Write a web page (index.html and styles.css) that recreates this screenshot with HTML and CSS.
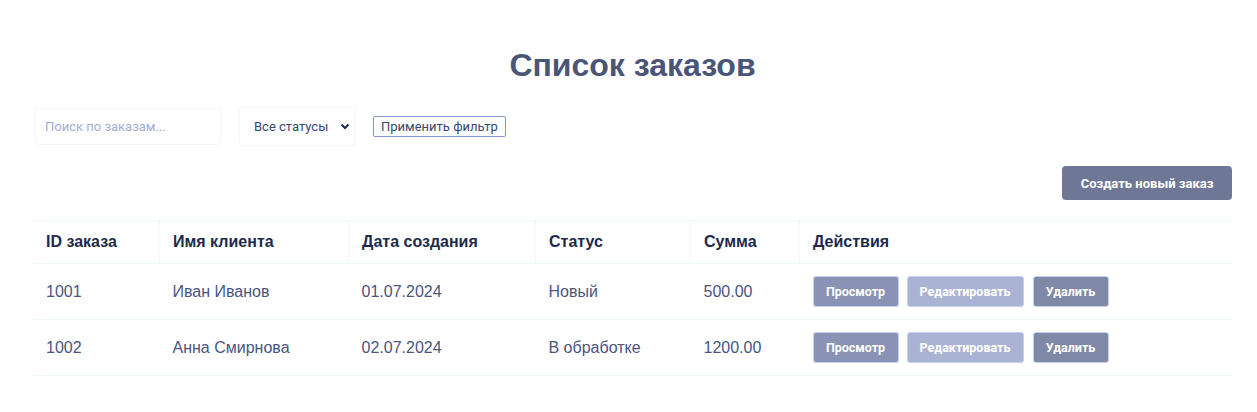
FILE: index.html
```html
<!DOCTYPE html>
<html lang="ru">
<head>
<meta charset="utf-8">
<title>Список заказов</title>
<link rel="stylesheet" href="styles.css">
</head>
<body>
<div class="page">
  <h1 class="title">Список заказов</h1>
  <div class="filters">
    <input class="search" type="text" placeholder="Поиск по заказам...">
    <div class="select">
      <span>Все статусы</span>
      <svg class="chev" width="10" height="7" viewBox="0 0 10 7"><path d="M1.5 1.5 L5 5 L8.5 1.5" fill="none" stroke="#1e2a4a" stroke-width="2"/></svg>
    </div>
    <button class="apply">Применить фильтр</button>
  </div>
  <div class="toolbar">
    <button class="create">Создать новый заказ</button>
  </div>
  <table class="orders">
    <thead>
      <tr><th class="c1">ID заказа</th><th class="c2">Имя клиента</th><th class="c3">Дата создания</th><th class="c4">Статус</th><th class="c5">Сумма</th><th>Действия</th></tr>
    </thead>
    <tbody>
      <tr><td>1001</td><td>Иван Иванов</td><td>01.07.2024</td><td>Новый</td><td>500.00</td>
        <td><div class="actions"><button class="btn view">Просмотр</button><button class="btn edit">Редактировать</button><button class="btn del">Удалить</button></div></td></tr>
      <tr><td>1002</td><td>Анна Смирнова</td><td>02.07.2024</td><td>В обработке</td><td>1200.00</td>
        <td><div class="actions"><button class="btn view">Просмотр</button><button class="btn edit">Редактировать</button><button class="btn del">Удалить</button></div></td></tr>
    </tbody>
  </table>
</div>
</body>
</html>
```
FILE: styles.css
```css
html, body { margin: 0; padding: 0; background: #fff; }
body { font-family: "Liberation Sans", Arial, sans-serif; color: #4a5580; }
.page { margin: 0 25px 0 33px; padding-top: 45px; }
.title { margin: 0; text-align: center; font-size: 32px; font-weight: bold; color: #4a5578; line-height: 40px; }
.filters { display: flex; align-items: center; margin-top: 22px; padding-left: 2px; }
.search {
  width: 186px; height: 37px; box-sizing: border-box; border: 1px solid #f1f7fd; border-radius: 3px;
  padding: 0 9px; font-family: Roboto, sans-serif; font-size: 13px; color: #3a4670; outline: none;
}
.search::placeholder { color: #a3acd9; }
.select {
  margin-left: 18px; width: 117px; height: 39px; box-sizing: border-box; border: 1px solid #f1f7fd; border-radius: 3px;
  display: flex; align-items: center; justify-content: space-between; padding: 0 5px 0 14px;
  font-family: Roboto, sans-serif; font-size: 13px; color: #3a4670;
}
.chev { display: block; }
.apply {
  margin-left: 17px; height: 21px; padding: 0 7px; background: #fff; border: 1px solid #8695cf; border-radius: 2px;
  font-family: Roboto, sans-serif; font-size: 13px; color: #3a4670; line-height: 19px;
}
.toolbar { display: flex; justify-content: flex-end; margin-top: 20px; }
.create {
  width: 170px; height: 34px; background: #6e7896; color: #fff; border: none; border-radius: 4px;
  font-family: Roboto, sans-serif; font-weight: bold; font-size: 13px;
}
.orders { width: 100%; border-collapse: collapse; margin-top: 20px; }
.orders th, .orders td { text-align: left; padding: 0 13px; font-size: 16px; }
.orders th { height: 42px; color: #1e2a4a; font-weight: bold; border-top: 1px solid #f0f8fc; border-bottom: 1px solid #f0f8fc; }
.orders th + th { border-left: 1px solid #f0f8fc; }
.orders td { height: 55px; border-bottom: 1px solid #f0f8fc; color: #4a5580; }
.c1 { width: 100px; }
.c2 { width: 162px; }
.c3 { width: 160px; }
.c4 { width: 128px; }
.c5 { width: 82px; }
.actions { display: flex; align-items: center; }
.btn {
  height: 31px; border: 1px solid #c9d0ec; border-radius: 3px; color: #fff; font-family: Roboto, sans-serif;
  font-weight: bold; font-size: 12.5px; padding: 0;
}
.view { background: #8a93b5; width: 86px; }
.edit { background: #aab3d4; width: 117px; margin-left: 8px; }
.del { background: #8088a8; width: 76px; margin-left: 9px; }
```
